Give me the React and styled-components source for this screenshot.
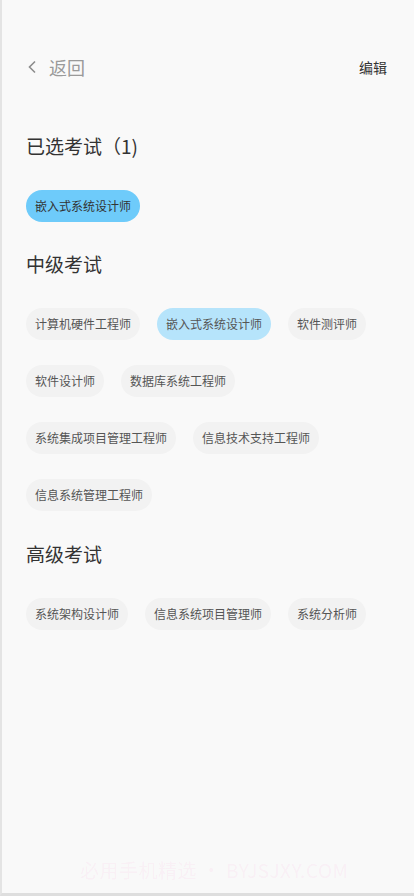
import React, { useState } from "react";
import styled, { createGlobalStyle } from "styled-components";

const GlobalStyle = createGlobalStyle`
  html, body {
    margin: 0;
    padding: 0;
    background: #f9f9f9;
  }
  body {
    font-family: "Noto Sans CJK SC", "Noto Sans", sans-serif;
    color: #333;
  }
`;

const Frame = styled.div`
  position: relative;
  box-sizing: border-box;
  height: 896px;
  border-left: 2px solid #e4e4e4;
  border-bottom: 3px solid #dedede;
  background: #f9f9f9;
  overflow: hidden;
`;

const Header = styled.div`
  display: flex;
  align-items: center;
  justify-content: space-between;
  height: 44px;
  margin-top: 45px;
  padding: 0 27px 0 25px;
`;

const Back = styled.div`
  display: flex;
  align-items: center;
  gap: 12px;
  color: #9a9a9a;
  font-size: 18px;
`;

const Edit = styled.div`
  font-size: 14px;
  color: #333;
`;

const Section = styled.section`
  padding: 0 24px;
  margin-top: ${(p) => p.$top}px;
`;

const Title = styled.h2`
  margin: 0;
  font-size: 19px;
  font-weight: 400;
  line-height: 28px;
  color: #333;
`;

const ChipWrap = styled.div`
  display: flex;
  flex-wrap: wrap;
  gap: 25px 17px;
  margin-top: 30px;
`;

const Chip = styled.button`
  height: 32px;
  padding: 0 9px;
  border: none;
  border-radius: 16px;
  font-family: inherit;
  font-size: 12px;
  line-height: 32px;
  white-space: nowrap;
  cursor: pointer;
  color: ${(p) => (p.$tone === "strong" ? "#333" : "#555")};
  background: ${(p) =>
    p.$tone === "strong" ? "#6ecbfa" : p.$tone === "soft" ? "#b6e4fb" : "#f2f2f2"};
`;

const Watermark = styled.div`
  position: absolute;
  left: 78px;
  bottom: 10px;
  font-size: 19px;
  letter-spacing: 0.5px;
  color: rgba(255, 120, 200, 0.08);
  pointer-events: none;
`;

const middle = [
  "计算机硬件工程师",
  "嵌入式系统设计师",
  "软件测评师",
  "软件设计师",
  "数据库系统工程师",
  "系统集成项目管理工程师",
  "信息技术支持工程师",
  "信息系统管理工程师",
];

const senior = ["系统架构设计师", "信息系统项目管理师", "系统分析师"];

export default function App() {
  const [picked, setPicked] = useState(["嵌入式系统设计师"]);

  const toggle = (name) =>
    setPicked((list) =>
      list.includes(name) ? list.filter((n) => n !== name) : [...list, name]
    );

  return (
    <Frame>
      <GlobalStyle />
      <Header>
        <Back>
          <svg width="10" height="14" viewBox="0 0 10 14">
            <path d="M8 1.5 L2.5 7 L8 12.5" fill="none" stroke="#8c8c8c" strokeWidth="1.6" />
          </svg>
          返回
        </Back>
        <Edit>编辑</Edit>
      </Header>

      <Section $top={43}>
        <Title>已选考试（{picked.length})</Title>
        <ChipWrap>
          {picked.map((name) => (
            <Chip key={name} $tone="strong" onClick={() => toggle(name)}>
              {name}
            </Chip>
          ))}
        </ChipWrap>
      </Section>

      <Section $top={28}>
        <Title>中级考试</Title>
        <ChipWrap>
          {middle.map((name) => (
            <Chip
              key={name}
              $tone={picked.includes(name) ? "soft" : ""}
              onClick={() => toggle(name)}
            >
              {name}
            </Chip>
          ))}
        </ChipWrap>
      </Section>

      <Section $top={29}>
        <Title>高级考试</Title>
        <ChipWrap>
          {senior.map((name) => (
            <Chip
              key={name}
              $tone={picked.includes(name) ? "soft" : ""}
              onClick={() => toggle(name)}
            >
              {name}
            </Chip>
          ))}
        </ChipWrap>
      </Section>

      <Watermark>必用手机精选 • BYJSJXY.COM</Watermark>
    </Frame>
  );
}
